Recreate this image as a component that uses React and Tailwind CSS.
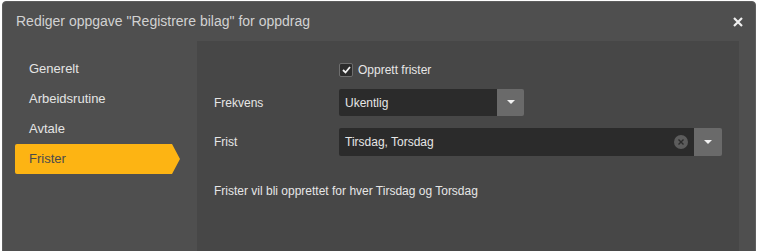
import React from "react";

const navItems = ["Generelt", "Arbeidsrutine", "Avtale", "Frister"];

const Caret = () => (
  <svg width="8" height="5" viewBox="0 0 8 5">
    <path d="M0 0 H8 L4 4 Z" fill="#f2f2f2" />
  </svg>
);

export default function App() {
  return (
    <div
      className="h-[251px] w-[757px] overflow-hidden bg-white"
      style={{ fontFamily: '"Liberation Sans", Arial, sans-serif' }}
    >
      <div className="ml-[2px] mt-[1px] h-[260px] w-[754px] rounded-t-[4px] border border-[#5e5e5e] bg-[#4f4f4f]">
        {/* HEADER */}
        <div className="flex h-[39px] items-center justify-between pl-[13px] pr-[12px]">
          <div className="text-[14px] text-[#d2d2d2]">
            Rediger oppgave "Registrere bilag" for oppdrag
          </div>
          <svg width="10" height="10" viewBox="0 0 10 10">
            <path d="M1 1 L9 9 M9 1 L1 9" stroke="#f0f0f0" strokeWidth="2.2" />
          </svg>
        </div>

        <div className="flex">
          {/* NAV */}
          <div className="w-[194px] shrink-0 pt-[13px] pl-[12px]">
            {navItems.map((item) => {
              const active = item === "Frister";
              return (
                <div key={item} className="relative flex h-[30px] w-[157px] items-center">
                  {active && (
                    <div
                      className="absolute inset-y-0 left-0 w-[165px] bg-[#fdb413]"
                      style={{ clipPath: "polygon(0 0, 157px 0, 165px 50%, 157px 100%, 0 100%)", borderRadius: 2 }}
                    />
                  )}
                  <span
                    className={
                      "relative pl-[14px] text-[13px] " +
                      (active ? "text-[#4b4b4b]" : "text-[#e4e4e4]")
                    }
                  >
                    {item}
                  </span>
                </div>
              );
            })}
          </div>

          {/* CONTENT */}
          <div className="h-[220px] w-[542px] bg-[#474747] px-[17px] pt-[20px] text-[12px] text-[#e6e6e6]">
            <div className="flex items-center pl-[125px]">
              <div className="flex h-[14px] w-[14px] items-center justify-center rounded-[2px] border border-[#6e6e6e] bg-[#2c2c2c]">
                <svg width="9" height="8" viewBox="0 0 9 8">
                  <path d="M1 4 L3.5 6.5 L8 1" stroke="#f2f2f2" strokeWidth="1.8" fill="none" />
                </svg>
              </div>
              <span className="ml-[5px]">Opprett frister</span>
            </div>

            <div className="mt-[10px] flex items-center">
              <div className="w-[125px]">Frekvens</div>
              <div className="flex h-[27px] w-[185px] overflow-hidden rounded-[2px]">
                <div className="flex flex-1 items-center bg-[#2b2b2b] pl-[6px]">Ukentlig</div>
                <div className="flex w-[27px] items-center justify-center bg-[#6a6a6a]">
                  <Caret />
                </div>
              </div>
            </div>

            <div className="mt-[12px] flex items-center">
              <div className="w-[125px]">Frist</div>
              <div className="flex h-[28px] flex-1 overflow-hidden rounded-[2px]">
                <div className="flex flex-1 items-center justify-between bg-[#2b2b2b] pl-[6px] pr-[6px]">
                  <span>Tirsdag, Torsdag</span>
                  <div className="flex h-[14px] w-[14px] items-center justify-center rounded-full bg-[#5c5c5c]">
                    <svg width="6" height="6" viewBox="0 0 6 6">
                      <path d="M0.5 0.5 L5.5 5.5 M5.5 0.5 L0.5 5.5" stroke="#2b2b2b" strokeWidth="1.4" />
                    </svg>
                  </div>
                </div>
                <div className="flex w-[28px] items-center justify-center bg-[#6a6a6a]">
                  <Caret />
                </div>
              </div>
            </div>

            <div className="mt-[26px]">Frister vil bli opprettet for hver Tirsdag og Torsdag</div>
          </div>
        </div>
      </div>
    </div>
  );
}
